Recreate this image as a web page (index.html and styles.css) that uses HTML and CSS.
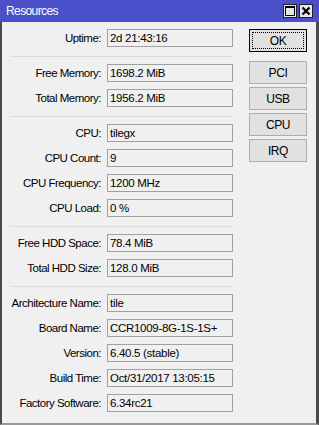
FILE: index.html
```html
<!DOCTYPE html>
<html>
<head>
<meta charset="utf-8">
<link rel="stylesheet" href="styles.css">
</head>
<body>
<div class="window">
  <div class="titlebar">
    <span class="title">Resources</span>
    <div class="tb-btns">
      <span class="tb-btn"><svg width="12" height="12" viewBox="0 0 12 12"><rect x="1.5" y="1.5" width="9" height="9" fill="none" stroke="#000" stroke-width="1"/><rect x="1" y="1" width="10" height="2" fill="#000"/></svg></span>
      <span class="tb-btn"><svg width="12" height="12" viewBox="0 0 12 12"><path d="M2.5 2.5 L9.5 9.5 M9.5 2.5 L2.5 9.5" stroke="#000" stroke-width="2.2" fill="none"/></svg></span>
    </div>
  </div>
  <div class="content">
    <div class="form">
      <div class="group">
        <div class="row"><span class="label">Uptime:</span><span class="value">2d 21:43:16</span></div>
      </div>
      <div class="group">
        <div class="row"><span class="label">Free Memory:</span><span class="value">1698.2 MiB</span></div>
        <div class="row"><span class="label">Total Memory:</span><span class="value">1956.2 MiB</span></div>
      </div>
      <div class="group">
        <div class="row"><span class="label">CPU:</span><span class="value">tilegx</span></div>
        <div class="row"><span class="label">CPU Count:</span><span class="value">9</span></div>
        <div class="row"><span class="label">CPU Frequency:</span><span class="value">1200 MHz</span></div>
        <div class="row"><span class="label">CPU Load:</span><span class="value">0 %</span></div>
      </div>
      <div class="group">
        <div class="row"><span class="label">Free HDD Space:</span><span class="value">78.4 MiB</span></div>
        <div class="row"><span class="label">Total HDD Size:</span><span class="value">128.0 MiB</span></div>
      </div>
      <div class="group">
        <div class="row"><span class="label">Architecture Name:</span><span class="value">tile</span></div>
        <div class="row"><span class="label">Board Name:</span><span class="value">CCR1009-8G-1S-1S+</span></div>
        <div class="row"><span class="label">Version:</span><span class="value">6.40.5 (stable)</span></div>
        <div class="row"><span class="label">Build Time:</span><span class="value">Oct/31/2017 13:05:15</span></div>
        <div class="row"><span class="label">Factory Software:</span><span class="value">6.34rc21</span></div>
      </div>
    </div>
    <div class="buttons">
      <button class="btn default"><span class="focus">OK</span></button>
      <button class="btn">PCI</button>
      <button class="btn">USB</button>
      <button class="btn">CPU</button>
      <button class="btn">IRQ</button>
    </div>
  </div>
</div>
</body>
</html>
```
FILE: styles.css
```css
html, body {
  margin: 0;
  padding: 0;
  background: #f0f0f0;
}
body {
  font-family: "Liberation Sans", Arial, sans-serif;
  font-size: 11.5px;
  color: #000;
}
.window {
  width: 319px;
  height: 425px;
  box-sizing: border-box;
  background: #f0f0f0;
  border-left: 2px solid #4a4a4a;
  border-right: 3px solid #4a4a4a;
  border-bottom: 2px solid #9a9a9a;
  display: flex;
  flex-direction: column;
}
.titlebar {
  height: 22px;
  margin: 0 -3px 0 -2px;
  background: #4b4fc9;
  display: flex;
  align-items: center;
  justify-content: space-between;
  padding: 0 6px 0 6px;
}
.title {
  color: #fff;
  font-size: 12px;
  letter-spacing: -0.6px;
}
.tb-btns {
  display: flex;
  gap: 2px;
}
.tb-btn {
  width: 14px;
  height: 14px;
  box-sizing: border-box;
  background: #e8e8e8;
  border: 1px solid #222;
  display: flex;
  align-items: center;
  justify-content: center;
}
.tb-btn svg { display: block; }
.content {
  display: flex;
  padding-top: 7px;
}
.form {
  width: 231px;
}
.group {
  display: flex;
  flex-direction: column;
  gap: 7px;
}
.group + .group {
  margin-top: 9px;
  margin-left: 8px;
  padding-top: 7px;
  border-top: 1px solid #dcdcdc;
}
.group + .group .row {
  margin-left: -8px;
}
.row {
  display: grid;
  grid-template-columns: 99px 126px;
  column-gap: 6px;
  align-items: center;
}
.label {
  text-align: right;
  white-space: nowrap;
  letter-spacing: -0.5px;
}
.value {
  height: 18px;
  box-sizing: border-box;
  border: 1px solid #a0a0a0;
  padding: 0 2px;
  line-height: 16px;
  white-space: nowrap;
  overflow: hidden;
  letter-spacing: -0.3px;
}
.buttons {
  margin-left: 16px;
  display: flex;
  flex-direction: column;
  gap: 3px;
}
.btn {
  width: 58px;
  height: 23px;
  box-sizing: border-box;
  background: #e1e1e1;
  border: 1px solid #adadad;
  font-family: "Liberation Sans", Arial, sans-serif;
  font-size: 12px;
  letter-spacing: -0.4px;
  color: #000;
  padding: 0;
  display: flex;
  align-items: center;
  justify-content: center;
}
.btn.default {
  border: 1px solid #000;
  margin-bottom: 6px;
  padding: 2px;
}
.focus {
  flex: 1;
  align-self: stretch;
  display: flex;
  align-items: center;
  justify-content: center;
  border: 1px dotted #000;
}
```
